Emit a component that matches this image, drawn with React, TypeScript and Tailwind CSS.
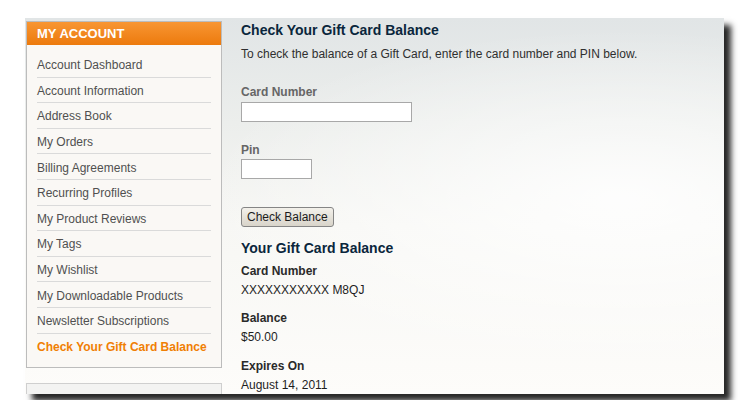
const menu = [
    'Account Dashboard',
    'Account Information',
    'Address Book',
    'My Orders',
    'Billing Agreements',
    'Recurring Profiles',
    'My Product Reviews',
    'My Tags',
    'My Wishlist',
    'My Downloadable Products',
    'Newsletter Subscriptions',
];

function Sidebar() {
    return (
        <aside className="w-[196px] shrink-0 mt-[3px] ml-[1px]">
            <div className="border border-[#bcbcbc] bg-[#faf8f5]">
                <div className="h-[23px] bg-[linear-gradient(180deg,#f89633_0%,#ec7a0d_100%)] pl-[10px] flex items-center">
                    <span className="text-white font-bold text-[13px] leading-none">MY ACCOUNT</span>
                </div>
                <ul className="pt-[7px] pb-[8px] px-[10px]">
                    {menu.map((item) => (
                        <li
                            key={item}
                            className="h-[25.6px] pt-[2px] flex items-center border-b border-[#dadada] text-[12px] text-[#505050]"
                        >
                            {item}
                        </li>
                    ))}
                    <li className="h-[25.6px] pt-[2px] flex items-center text-[12px] font-bold text-[#f07f04]">
                        Check Your Gift Card Balance
                    </li>
                </ul>
            </div>
            <div className="mt-[15px] h-[40px] border border-[#cfcfcf] bg-[#f3f3f2]" />
        </aside>
    );
}

function Field({ label, value }: { label: string; value: string }) {
    return (
        <>
            <p className="text-[12px] leading-[16px] font-bold text-[#2a2a2a]">{label}</p>
            <p className="mt-[3px] text-[12px] leading-[16px] text-[#1e1e1e]">{value}</p>
        </>
    );
}

export default function App() {
    return (
        <div className="w-[750px] h-[400px] bg-white overflow-hidden font-['Liberation_Sans',Arial,sans-serif]">
            <div className="ml-[25px] mt-[18px] w-[699px] h-[376px] flex overflow-hidden shadow-[7px_7px_6px_rgba(0,0,0,0.85)] bg-[radial-gradient(ellipse_60%_45%_at_85%_48%,rgba(255,255,255,0.85),rgba(255,255,255,0)),linear-gradient(180deg,#e1e5e6_0%,#eceeec_28%,#f7f7f4_55%,#fdfcfa_100%)]">
                <Sidebar />
                <main className="ml-[19px] pt-[3px] text-[#2f2f2f]">
                    <h2 className="text-[14px] leading-[18px] font-bold text-[#0a263c]">Check Your Gift Card Balance</h2>
                    <p className="mt-[7px] text-[12px] leading-[16px] text-[#2f2f2f]">
                        To check the balance of a Gift Card, enter the card number and PIN below.
                    </p>
                    <label className="block mt-[22px] text-[12px] leading-[16px] font-bold text-[#666]">Card Number</label>
                    <input type="text" className="block mt-[2px] w-[171px] h-[20px] border border-[#a8a8a8] bg-white" />
                    <label className="block mt-[20px] text-[12px] leading-[16px] font-bold text-[#666]">Pin</label>
                    <input type="text" className="block mt-[1px] w-[71px] h-[20px] border border-[#a8a8a8] bg-white" />
                    <button className="block mt-[28px] h-[20px] px-[5px] rounded-[3px] border border-[#858585] bg-[linear-gradient(180deg,#f3f1eb_0%,#d8d4ca_100%)] text-[12px] leading-none text-[#1c1c1c]">
                        Check Balance
                    </button>
                    <h2 className="mt-[12px] text-[14px] leading-[18px] font-bold text-[#0a263c]">Your Gift Card Balance</h2>
                    <div className="mt-[6px]">
                        <Field label="Card Number" value="XXXXXXXXXXX M8QJ" />
                    </div>
                    <div className="mt-[12px]">
                        <Field label="Balance" value="$50.00" />
                    </div>
                    <div className="mt-[13px]">
                        <Field label="Expires On" value="August 14, 2011" />
                    </div>
                </main>
            </div>
        </div>
    );
}
